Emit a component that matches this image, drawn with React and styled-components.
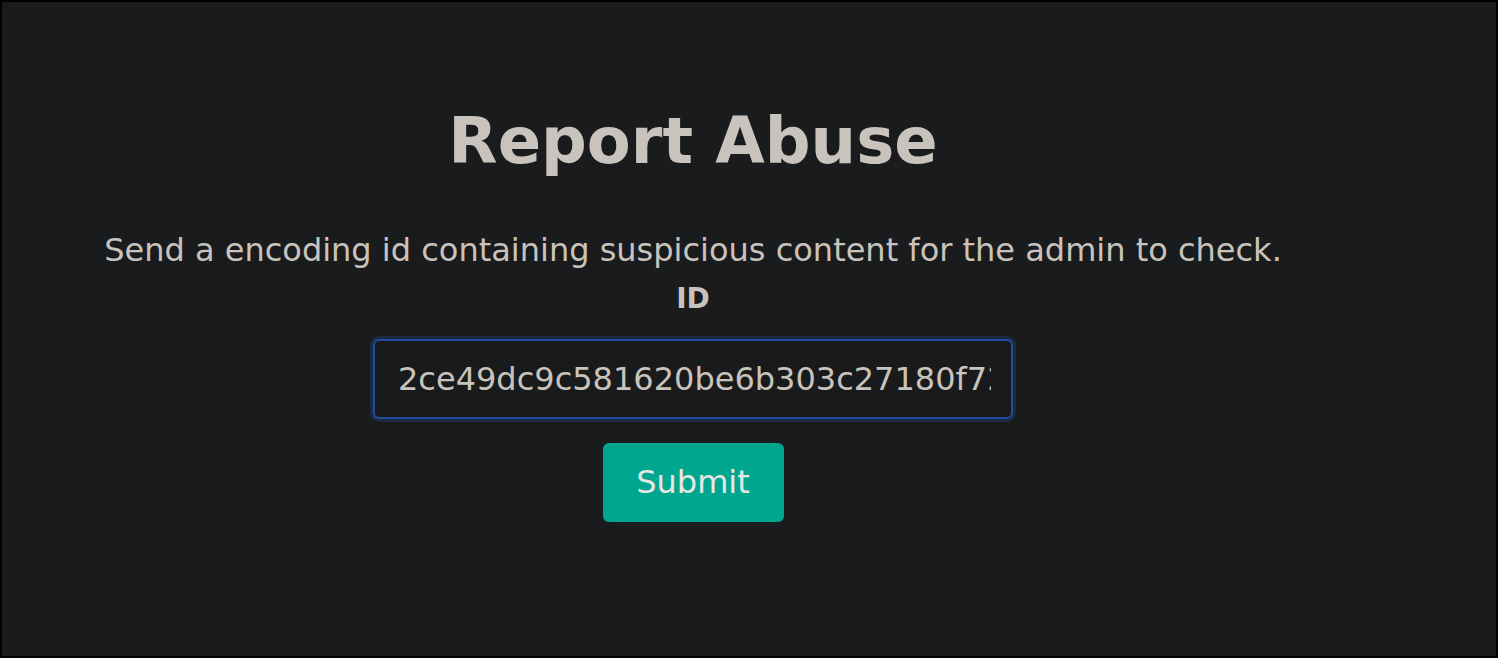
import React, { useState } from "react";
import styled, { createGlobalStyle } from "styled-components";

const GlobalStyle = createGlobalStyle`
  * { box-sizing: border-box; }
  html, body {
    margin: 0;
    padding: 0;
    background: #1a1b1d;
  }
  body {
    font-family: "DejaVu Sans", "Liberation Sans", sans-serif;
    color: #c8c3bc;
  }
`;

export default function App() {
  const [id, setId] = useState("2ce49dc9c581620be6b303c27180f72a9e41d3b8");

  return (
    <>
      <GlobalStyle />
      <Frame>
        <Main>
          <Title>Report Abuse</Title>
          <Lead>Send a encoding id containing suspicious content for the admin to check.</Lead>
          <Form onSubmit={(e) => e.preventDefault()}>
            <Label htmlFor="id">ID</Label>
            <Input id="id" type="text" value={id} onChange={(e) => setId(e.target.value)} />
            <SubmitBtn type="submit">Submit</SubmitBtn>
          </Form>
        </Main>
      </Frame>
    </>
  );
}

const Frame = styled.div`
  width: 1498px;
  height: 658px;
  border: 2px solid #000;
  background: #1a1b1d;
  overflow: hidden;
`;

const Main = styled.main`
  width: 1382px;
  text-align: center;
  padding-top: 102px;
`;

const Title = styled.h1`
  margin: 0;
  font-size: 64px;
  font-weight: 700;
  line-height: 74.5px;
  color: #c8c3bc;
`;

const Lead = styled.p`
  margin: 53px 0 0;
  font-size: 32px;
  line-height: 37px;
  color: #c8c3bc;
`;

const Form = styled.form`
  display: flex;
  flex-direction: column;
  align-items: center;
`;

const Label = styled.label`
  margin-top: 14px;
  font-size: 28px;
  font-weight: 700;
  line-height: 32px;
  color: #c8c3bc;
`;

const Input = styled.input`
  margin-top: 24px;
  width: 640px;
  height: 80px;
  padding: 0 20px 0 23px;
  border: 2px solid #1f4f9c;
  border-radius: 6px;
  background: #181a1b;
  color: #c8c3bc;
  font-family: "DejaVu Sans", "Liberation Sans", sans-serif;
  font-size: 32px;
  box-shadow: 0 0 0 3px #1c2a44;
  outline: none;
`;

const SubmitBtn = styled.button`
  margin-top: 24px;
  width: 181px;
  height: 79px;
  border: none;
  border-radius: 6px;
  background: #00a68e;
  color: #e8e6e3;
  font-family: "DejaVu Sans", "Liberation Sans", sans-serif;
  font-size: 32px;
  cursor: pointer;
`;
